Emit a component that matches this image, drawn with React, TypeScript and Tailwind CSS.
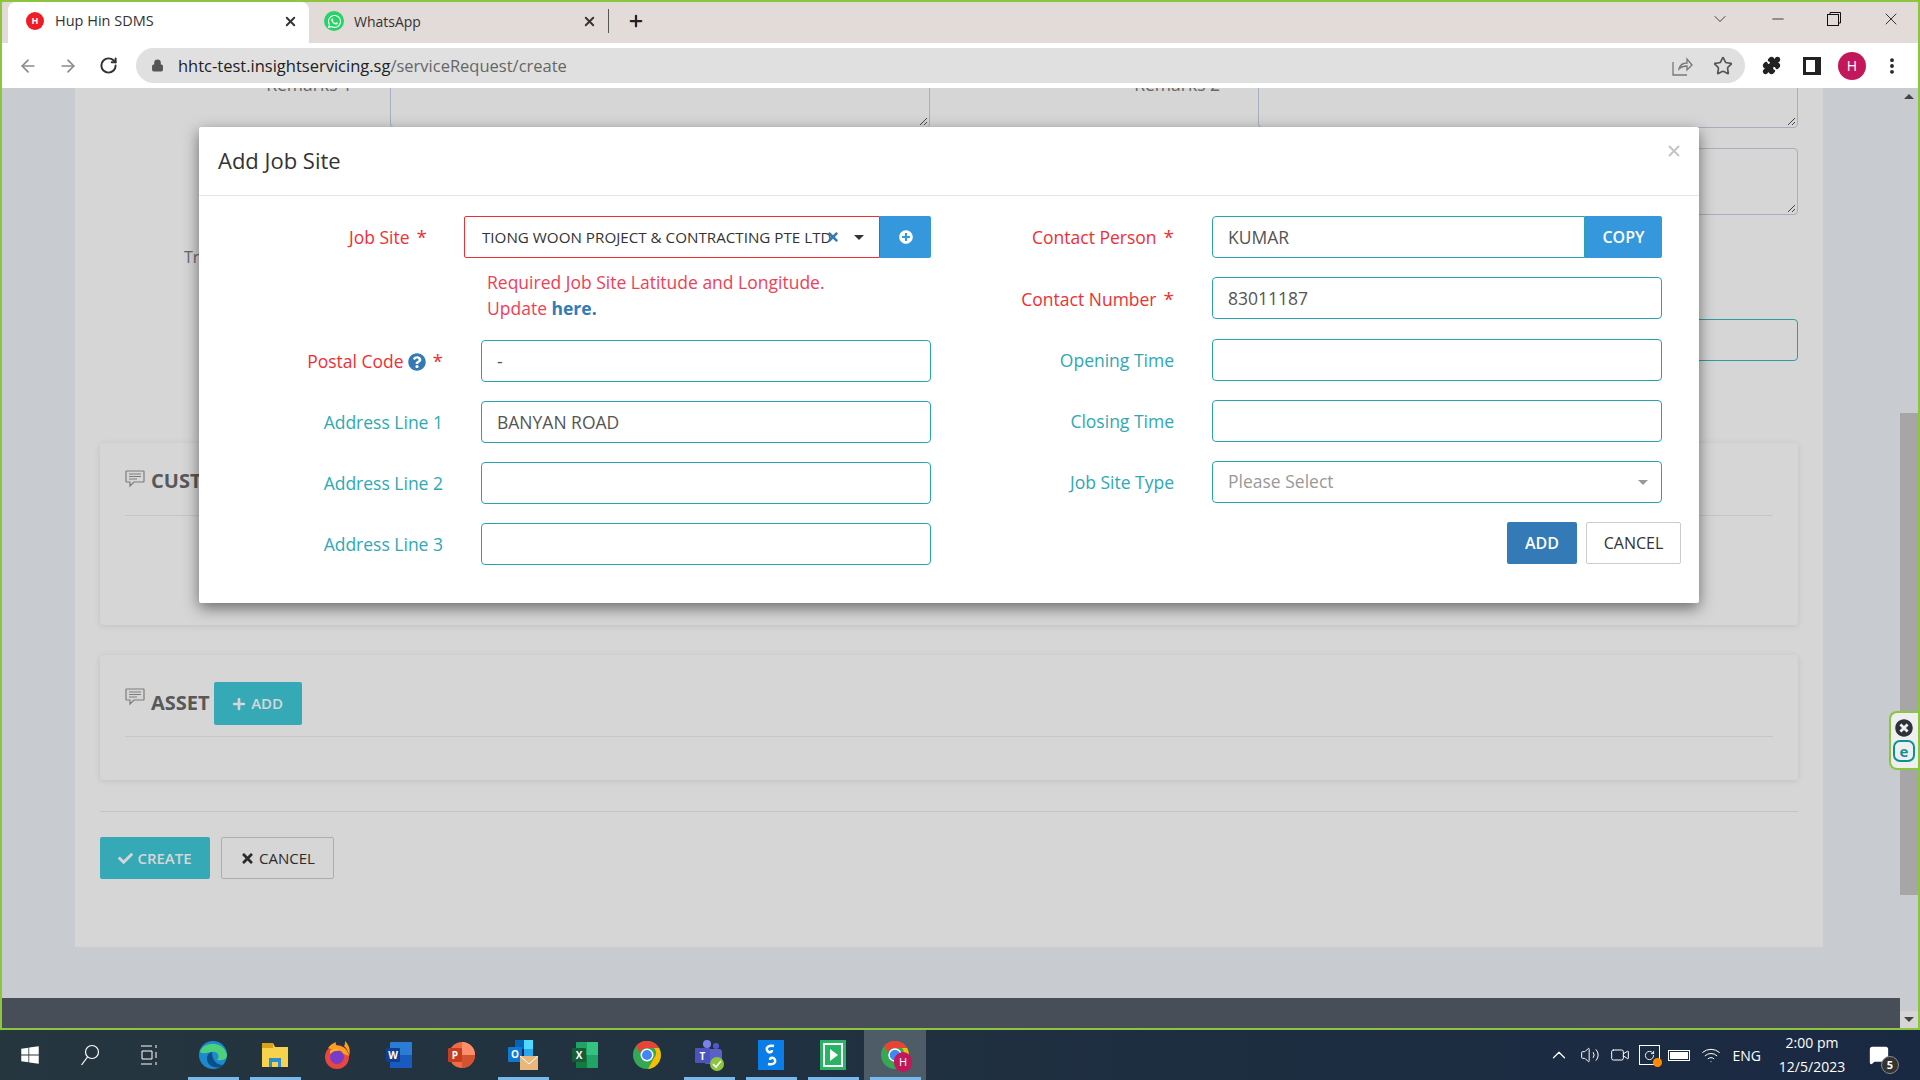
import type { ReactNode } from 'react';
import { ArrowLeft, ArrowRight, RotateCw, Lock, Star, Puzzle, X, Plus, ChevronDown, Minus, ChevronUp, MoreVertical, Volume2, Video, Wifi, MessageSquare } from 'lucide-react';
import { FaWhatsapp, FaCheck, FaTimes, FaPlus, FaQuestionCircle, FaPlusCircle, FaTimesCircle, FaWindows } from 'react-icons/fa';

const font = { fontFamily: '"Open Sans", sans-serif' };

function Tabs() {
  return (
    <div className="flex h-[41px] items-end bg-[#e3dbd8] pl-[6px] pr-[8px]">
      <div className="flex h-[41px] w-[301px] items-center rounded-t-[8px] bg-white pb-[3px] pl-[18px] pr-[11px]">
        <div className="flex h-[18px] w-[18px] items-center justify-center rounded-full bg-[#ee1c25] text-[9px] font-bold text-white">H</div>
        <span className="ml-[11px] flex-1 text-[14.5px] text-[#333]">Hup Hin SDMS</span>
        <X size={15} strokeWidth={3} className="text-[#333]" />
      </div>
      <div className="flex h-[41px] w-[300px] items-center pb-[3px]">
        <div className="ml-[15px] flex h-[20px] w-[20px] items-center justify-center rounded-full bg-[#25d366] text-white"><FaWhatsapp size={15} /></div>
        <span className="ml-[10px] flex-1 text-[14px] text-[#333]">WhatsApp</span>
        <X size={15} strokeWidth={3} className="text-[#333]" />
        <div className="ml-[11px] h-[24px] w-px bg-[#555]" />
      </div>
      <div className="flex h-[41px] items-center pb-[3px] pl-[18px]"><Plus size={18} strokeWidth={3} className="text-[#222]" /></div>
      <div className="flex-1" />
      <div className="flex h-[41px] items-center self-start pb-[8px]">
        <ChevronDown size={20} strokeWidth={1} className="mr-[39px] text-[#222]" />
        <Minus size={18} strokeWidth={1} className="mr-[40px] text-[#111]" />
        <svg width="14" height="14" viewBox="0 0 14 14" fill="none" stroke="#111" className="mr-[40px]"><rect x="0.5" y="2.5" width="11" height="11" /><path d="M3 2.5V.5h10.5V11h-2" /></svg>
        <X size={20} strokeWidth={1} className="mr-[9px] text-[#111]" />
      </div>
    </div>
  );
}

function Toolbar() {
  return (
    <div className="flex h-[45px] items-center bg-white">
      <ArrowLeft size={20} className="ml-[16px] text-[#8a8a8a]" />
      <ArrowRight size={20} className="ml-[20px] text-[#8a8a8a]" />
      <RotateCw size={19} strokeWidth={2.5} className="ml-[21px] text-[#333]" />
      <div className="ml-[18px] flex h-[35px] w-[1609px] items-center rounded-full bg-[#e0e0e0] pl-[15px]">
        <Lock size={13} fill="#555" className="text-[#555]" />
        <span className="ml-[14px] flex-1 pt-[1px] text-[16.5px] text-[#222]">hhtc-test.insightservicing.sg<span className="text-[#666]">/serviceRequest/create</span></span>
        <svg width="21" height="20" viewBox="0 0 21 20" fill="none" stroke="#777" strokeWidth="1.3" className="mr-[20px]"><path d="M1 6v13h14M7 13c1-4 4-6 8-6V3l5 6-5 5v-4c-3 0-6 1-8 3z" /></svg>
        <Star size={20} strokeWidth={2} className="mr-[12px] text-[#555]" />
      </div>
      <Puzzle size={19} fill="#222" className="ml-[17px] text-[#222]" />
      <div className="ml-[22px] flex h-[18px] w-[18px] items-center bg-[#222] pl-[3px]"><div className="h-[12px] w-[9px] bg-white" /></div>
      <div className="ml-[17px] flex h-[28px] w-[28px] items-center justify-center rounded-full bg-[#c2185b] text-[14px] text-white">H</div>
      <MoreVertical size={20} strokeWidth={2.6} className="ml-[16px] text-[#222]" />
    </div>
  );
}

function Textarea({ className }: { className: string }) {
  return (
    <div className={`relative rounded-[4px] border border-[#a6aec0] ${className}`}>
      <svg width="9" height="9" viewBox="0 0 9 9" stroke="#444" className="absolute bottom-[1px] right-[1px]"><path d="M1 8l7-7M5 8l3-3" /></svg>
    </div>
  );
}

function SectionTitle({ children, iconClass }: { children: ReactNode; iconClass: string }) {
  return (
    <div className="flex h-[43px] items-center">
      <svg width="20" height="18" viewBox="0 0 20 18" fill="none" stroke="#7c7c7c" strokeWidth="1.2" className={`mr-[6px] ${iconClass}`}>
        <path d="M1.5 1h17a.5.5 0 0 1 .5.5v10a.5.5 0 0 1-.5.5H9l-4 4v-4H1.5a.5.5 0 0 1-.5-.5v-10a.5.5 0 0 1 .5-.5z" />
        <path d="M4 4h12M4 6.5h12M4 9h8" />
      </svg>
      <span className="text-[20px] font-bold text-[#585858]">{children}</span>
    </div>
  );
}

function Page() {
  return (
    <div className="flex flex-1 flex-col overflow-hidden">
      <div className="flex h-[910px] bg-[#c8cbcf]">
        <div className="w-[74px]" />
        <div className="-mt-[36px] h-[895px] w-[1748px] bg-[#d6d6d6] px-[25px] text-[#666]">
          <div className="flex h-[76px]">
            <div className="w-[252px] pt-[19px] text-right text-[17.5px]">Remarks 1</div>
            <Textarea className="ml-[38px] w-[540px]" />
            <div className="w-[290px] pt-[19px] text-right text-[17.5px]">Remarks 2</div>
            <Textarea className="ml-[38px] w-[540px]" />
          </div>
          <div className="mt-[20px] flex justify-end"><Textarea className="h-[67px] w-[540px]" /></div>
          <div className="mt-[31px] h-[22px] pl-[84px] text-[16px] leading-[22px]">Tr</div>
          <div className="mt-[51px] ml-auto h-[42px] w-[540px] rounded-[4px] border border-[#2f9ba6]" />
          <div className="mt-[82px] h-[182px] rounded-[4px] bg-[#d6d6d6] px-[25px] pt-[15px] shadow-[0_1px_6px_rgba(0,0,0,0.1)]">
            <div className="mt-[1px] border-b border-[#c6c6c6] pb-[13px]"><SectionTitle iconClass="-mt-[3px]">CUSTOMER</SectionTitle></div>
          </div>
          <div className="mt-[30px] h-[125px] rounded-[4px] bg-[#d6d6d6] px-[25px] pt-[27px] shadow-[0_1px_6px_rgba(0,0,0,0.1)]">
            <div className="flex h-[55px] items-start border-b border-[#c6c6c6]">
              <div className="-mt-[1px]"><SectionTitle iconClass="-mt-[12px]">ASSET</SectionTitle></div>
              <button className="ml-[4px] flex h-[43px] w-[88px] items-center justify-center gap-[5px] rounded-[2px] bg-[#36a9b6] text-[15px] font-semibold text-[#d6d6d6]"><FaPlus size={14} />ADD</button>
            </div>
          </div>
          <div className="mt-[31px] border-t border-[#c4c4c4] pt-[25px]">
            <div className="flex gap-[11px]">
              <button className="flex h-[42px] w-[110px] items-center justify-center gap-[4px] rounded-[2px] bg-[#36a9b6] text-[15px] font-semibold text-[#d6d6d6]"><FaCheck size={15} />CREATE</button>
              <button className="flex h-[42px] w-[113px] items-center justify-center gap-[4px] rounded-[2px] border border-[#adadad] text-[15px] text-[#2b2b2b]"><FaTimes size={15} />CANCEL</button>
            </div>
          </div>
        </div>
        <div className="w-[78px]" />
      </div>
      <div className="h-[30px] bg-[#474e58]" />
    </div>
  );
}

function Scrollbar() {
  return (
    <div className="flex w-[18px] flex-col bg-[#c8cbcf]">
      <div className="flex h-[17px] justify-center pt-[6px] text-[#444]"><div className="h-0 w-0 border-x-[5px] border-b-[5px] border-x-transparent border-b-[#444]" /></div>
      <div className="mt-[308px] h-[482px] bg-[#a6a6a6]" />
      <div className="flex-1" />
      <div className="flex h-[17px] justify-center bg-[#d6d6d6] pt-[6px]"><div className="h-0 w-0 border-x-[5px] border-t-[5px] border-x-transparent border-t-[#444]" /></div>
    </div>
  );
}

function Label({ children, required, tip }: { children: ReactNode; required?: boolean; tip?: boolean }) {
  return (
    <div className={`flex w-[244px] shrink-0 items-center justify-end gap-[7px] pt-[1px] text-[17.5px] ${required ? 'text-[#ee2f35]' : 'text-[#2fa8b5]'}`}>
      <span>{children}</span>
      {tip && <FaQuestionCircle size={18} className="-ml-[3px] text-[#337ab7]" />}
      {required && <span className="text-[19px]">*</span>}
    </div>
  );
}

function Field({ label, value, required, tip }: { label: string; value?: string; required?: boolean; tip?: boolean }) {
  return (
    <div className="flex h-[42px]">
      <Label required={required} tip={tip}>{label}</Label>
      <div className="ml-[38px] flex w-[450px] shrink-0 items-center rounded-[4px] border border-[#29a3af] px-[15px] text-[17.5px] text-[#555]">{value}</div>
    </div>
  );
}

function Modal() {
  return (
    <div className="absolute left-[197px] top-[39px] h-[476px] w-[1500px] rounded-[2px] bg-white shadow-[0_5px_15px_rgba(0,0,0,0.5)]">
      <div className="flex h-[69px] items-center justify-between border-b border-[#e5e5e5] pb-[2px] pl-[19px] pr-[16px]">
        <span className="text-[22px] text-[#333]">Add Job Site</span>
        <X size={18} strokeWidth={2.5} className="-mt-[19px] text-[#c4c4c4]" />
      </div>
      <div className="flex pt-[20px]">
        <div className="w-[731px] shrink-0">
          <div className="flex h-[42px]">
            <div className="flex w-[228px] shrink-0 items-center justify-end gap-[7px] pt-[1px] text-[17.5px] text-[#ee2f35]"><span>Job Site</span><span className="text-[19px]">*</span></div>
            <div className="ml-[37px] flex w-[416px] shrink-0 items-center rounded-l-[2px] border border-[#ee2f35] pl-[17px] text-[15.2px] text-[#333]">
              <span className="w-[356px] overflow-hidden whitespace-nowrap">TIONG WOON PROJECT &amp; CONTRACTING PTE LTD</span>
              <FaTimes size={14} className="-ml-[12px] text-[#337ab7]" />
              <div className="ml-[14px] h-0 w-0 border-x-[5px] border-t-[5px] border-x-transparent border-t-[#333]" />
            </div>
            <div className="flex w-[51px] shrink-0 items-center justify-center rounded-r-[2px] bg-[#3598dc] text-white"><FaPlusCircle size={14} /></div>
          </div>
          <div className="ml-[288px] mt-[12px] h-[50px] text-[17.5px] leading-[25.5px] text-[#ef4056]">
            Required Job Site Latitude and Longitude.<br />Update <span className="font-bold text-[#337ab7]">here.</span>
          </div>
          <div className="mt-[20px] flex flex-col gap-[19px]">
            <Field label="Postal Code" value="-" required tip />
            <Field label="Address Line 1" value="BANYAN ROAD" />
            <Field label="Address Line 2" />
            <Field label="Address Line 3" />
          </div>
        </div>
        <div className="w-[731px] shrink-0">
          <div className="flex flex-col gap-[19.25px]">
            <div className="flex h-[42px]">
              <Label required>Contact Person</Label>
              <div className="ml-[38px] flex w-[450px] shrink-0">
                <div className="flex flex-1 items-center rounded-l-[4px] border border-[#29a3af] px-[15px] text-[17.5px] text-[#555]">KUMAR</div>
                <div className="flex w-[77px] items-center justify-center rounded-r-[2px] bg-[#3598dc] text-[16px] font-semibold text-white">COPY</div>
              </div>
            </div>
            <Field label="Contact Number" value="83011187" required />
            <Field label="Opening Time" />
            <Field label="Closing Time" />
            <div className="flex h-[42px]">
              <Label>Job Site Type</Label>
              <div className="ml-[38px] flex w-[450px] shrink-0 items-center justify-between rounded-[4px] border border-[#29a3af] px-[15px] pb-[2px] text-[17.5px] text-[#999]">
                Please Select
                <div className="-mr-[2px] mt-[2px] h-0 w-0 border-x-[5px] border-t-[5px] border-x-transparent border-t-[#999]" />
              </div>
            </div>
          </div>
          <div className="mt-[19px] flex w-[751px] justify-end gap-[9px]">
            <button className="h-[42px] w-[70px] rounded-[2px] bg-[#337ab7] text-[16px] font-semibold text-white">ADD</button>
            <button className="h-[42px] w-[95px] rounded-[2px] border border-[#ccc] text-[16px] text-[#333]">CANCEL</button>
          </div>
        </div>
      </div>
    </div>
  );
}

function Eset() {
  return (
    <div className="absolute right-0 top-[623px] flex h-[59px] w-[29px] flex-col items-center justify-center gap-[3px] rounded-l-[8px] border-2 border-r-0 border-[#8cc63f] bg-[#eef0f0] pr-[1px]">
      <FaTimesCircle size={18} className="text-[#2d3238]" />
      <div className="flex h-[22px] w-[22px] items-center justify-center rounded-[7px] border-2 border-[#0f8f97] text-[15px] font-bold leading-none text-[#0f8f97]">e</div>
    </div>
  );
}

// taskbar app icons are rough hand drawn shapes
const apps: { icon: ReactNode; line?: boolean; active?: boolean }[] = [
  { line: true, icon: <svg width="30" height="30" viewBox="0 0 30 30"><circle cx="15" cy="15" r="14" fill="#1d8ad0" /><path d="M2 12C5 1 26 0 29 15c0 5-6 6-10 5 4-4 0-9-5-8-5 0-7 3-12 0z" fill="#4cd07d" /><path d="M14 12c-6 1-7 10-1 14 4 2 9 2 13-1-7 1-12-5-12-13z" fill="#0c4f87" /></svg> },
  { line: true, icon: <svg width="30" height="30" viewBox="0 0 30 30"><path d="M2 3h11l2 4h13v20H2z" fill="#f8d24b" /><rect x="2" y="3" width="11" height="5" fill="#d9a21b" /><path d="M9 27v-9h12v9h-3v-5h-6v5z" fill="#2b8fd1" /></svg> },
  { icon: <svg width="30" height="30" viewBox="0 0 30 30"><circle cx="15" cy="17" r="12" fill="#e8473f" /><path d="M6 8c3-4 6-5 8-6-1 3 1 4 4 4 4 1 8 4 9 11 0-6-3-9-5-11 1-1 1-3 1-5 4 4 6 9 4 15L6 8z" fill="#ff9d1e" /><circle cx="15" cy="17" r="7" fill="#7a3bc8" /><path d="M8 11c3-3 8-2 10 0-4-1-7 0-10 3z" fill="#ffb42a" /></svg> },
  { icon: <svg width="30" height="30" viewBox="0 0 30 30"><rect x="6" y="2" width="22" height="26" rx="1" fill="#2b7cd3" /><rect x="6" y="15" width="22" height="13" fill="#185abd" /><rect x="2" y="8" width="14" height="14" rx="1" fill="#103f91" /><text x="9" y="19" textAnchor="middle" fontSize="10" fontWeight="700" fill="#fff" fontFamily="Open Sans">W</text></svg> },
  { icon: <svg width="30" height="30" viewBox="0 0 30 30"><circle cx="16" cy="15" r="13" fill="#ed6c47" /><path d="M16 2a13 13 0 0 1 13 13H16z" fill="#ff8f6b" /><path d="M16 15h13a13 13 0 0 1-13 13z" fill="#d35230" /><rect x="2" y="8" width="14" height="14" rx="1" fill="#c43e1c" /><text x="9" y="19" textAnchor="middle" fontSize="10" fontWeight="700" fill="#fff" fontFamily="Open Sans">P</text></svg> },
  { line: true, icon: <svg width="34" height="34" viewBox="0 0 34 34"><rect x="9" y="2" width="18" height="18" fill="#28a8ea" /><rect x="9" y="2" width="9" height="9" fill="#0364b8" /><rect x="18" y="2" width="9" height="9" fill="#50d9ff" /><rect x="9" y="11" width="9" height="12" fill="#0a2767" /><rect x="2" y="9" width="14" height="15" rx="1" fill="#0f78d4" /><text x="9" y="20" textAnchor="middle" fontSize="10" fontWeight="700" fill="#fff" fontFamily="Open Sans">O</text><rect x="14" y="18" width="18" height="14" fill="#e8b77c" /><path d="M14 18l9 8 9-8" fill="none" stroke="#fff" /></svg> },
  { icon: <svg width="30" height="30" viewBox="0 0 30 30"><rect x="6" y="2" width="22" height="26" rx="1" fill="#21a366" /><rect x="17" y="2" width="11" height="13" fill="#33c481" /><rect x="6" y="15" width="11" height="13" fill="#107c41" /><rect x="2" y="8" width="14" height="14" rx="1" fill="#185c37" /><text x="9" y="19" textAnchor="middle" fontSize="10" fontWeight="700" fill="#fff" fontFamily="Open Sans">X</text></svg> },
  { icon: <svg width="30" height="30" viewBox="0 0 30 30"><circle cx="15" cy="15" r="14" fill="#34a853" /><path d="M15 1a14 14 0 0 1 12 7H15a7 7 0 0 0-7 5L4 6a14 14 0 0 1 11-5z" fill="#ea4335" /><path d="M27 8a14 14 0 0 1-11 21l6-11a7 7 0 0 0 0-10z" fill="#fbbc04" /><circle cx="15" cy="15" r="6.5" fill="#fff" /><circle cx="15" cy="15" r="5" fill="#4285f4" /></svg> },
  { line: true, icon: <svg width="34" height="34" viewBox="0 0 34 34"><circle cx="15" cy="6" r="4" fill="#7b83eb" /><circle cx="24" cy="8" r="3" fill="#5059c9" /><rect x="12" y="11" width="18" height="15" rx="3" fill="#5b5fc7" /><rect x="3" y="10" width="15" height="15" rx="1" fill="#4b53bc" /><text x="10.5" y="21.5" textAnchor="middle" fontSize="10" fontWeight="700" fill="#fff" fontFamily="Open Sans">T</text><circle cx="25" cy="26" r="7" fill="#8cc63f" /><path d="M21 26l3 3 5-6" fill="none" stroke="#fff" strokeWidth="1.6" /></svg> },
  { line: true, icon: <svg width="30" height="30" viewBox="0 0 30 30"><rect x="2" y="0" width="26" height="30" fill="#0a7de8" /><path d="M18 6c-5-1-8 1-7 4s5 3 5 0M12 24c5 1 8-1 7-4s-5-3-5 0" fill="none" stroke="#fff" strokeWidth="2.4" /></svg> },
  { line: true, icon: <svg width="30" height="30" viewBox="0 0 30 30"><rect x="2" y="0" width="26" height="30" fill="#28b463" /><rect x="5" y="3" width="20" height="24" fill="#fff" /><rect x="7" y="5" width="16" height="20" fill="#28b463" /><path d="M12 9l8 6-8 6z" fill="#fff" /></svg> },
  { line: true, active: true, icon: <div className="relative h-[30px] w-[30px]"><svg width="30" height="30" viewBox="0 0 30 30"><circle cx="15" cy="15" r="14" fill="#34a853" /><path d="M15 1a14 14 0 0 1 12 7H15a7 7 0 0 0-7 5L4 6a14 14 0 0 1 11-5z" fill="#ea4335" /><path d="M27 8a14 14 0 0 1-11 21l6-11a7 7 0 0 0 0-10z" fill="#fbbc04" /><circle cx="15" cy="15" r="6" fill="#4285f4" stroke="#fff" strokeWidth="1.5" /></svg><div className="absolute -bottom-[2px] -right-[2px] flex h-[20px] w-[18px] items-center justify-center rounded-full bg-[#c2185b] text-[11px] text-white">H</div></div> },
];

function Taskbar() {
  return (
    <div className="flex h-[50px] items-center bg-gradient-to-r from-[#25363f] to-[#1a2942] text-white">
      <FaWindows size={20} className="ml-[20px]" />
      <svg width="20" height="22" viewBox="0 0 20 22" fill="none" stroke="#fff" strokeWidth="1.2" className="ml-[40px]"><circle cx="12" cy="8" r="6.5" /><path d="M7.5 13l-6 8" /></svg>
      <svg width="18" height="20" viewBox="0 0 18 20" fill="none" stroke="#fff" className="ml-[41px]"><path d="M0 1h11M0 19h11M1 6h10v8H1zM15 0v3M15 7v6M15 17v3" /></svg>
      <div className="ml-[23px] flex">
        {apps.map((app, i) => (
          <div key={i} className={`relative flex h-[50px] w-[62px] items-center justify-center ${app.active ? 'bg-[#4d5c66]' : ''}`}>
            {app.icon}
            {app.line && <div className="absolute bottom-0 h-[3px] w-[51px] bg-[#76b9ed]" />}
          </div>
        ))}
      </div>
      <div className="flex-1" />
      <ChevronUp size={22} strokeWidth={1.3} />
      <Volume2 size={20} strokeWidth={1.2} className="ml-[10px]" />
      <Video size={20} strokeWidth={1.2} className="ml-[10px]" />
      <div className="relative ml-[9px] flex h-[20px] w-[21px] items-center justify-center border border-white">
        <RotateCw size={11} />
        <div className="absolute -bottom-[3px] -right-[3px] h-[9px] w-[9px] rounded-full bg-[#ff8c00]" />
      </div>
      <div className="ml-[8px] flex h-[11px] w-[22px] items-center border border-white p-px"><div className="h-full w-full bg-white" /></div>
      <Wifi size={20} strokeWidth={1.2} className="ml-[11px]" />
      <span className="ml-[12px] text-[14px]">ENG</span>
      <div className="ml-[16px] w-[70px] whitespace-nowrap text-center text-[14px] leading-[24px]">2:00 pm<br />12/5/2023</div>
      <div className="relative ml-[22px] mr-[31px]">
        <MessageSquare size={20} fill="#fff" />
        <div className="absolute -bottom-[9px] -right-[10px] flex h-[18px] w-[18px] items-center justify-center rounded-full border border-[#888] bg-[#333] text-[11px] font-bold">5</div>
      </div>
    </div>
  );
}

export default function App() {
  return (
    <div className="flex h-[1080px] w-[1920px] flex-col overflow-hidden bg-[#8cc63f]" style={font}>
      <div className="mx-[2px] mt-[2px] flex flex-1 flex-col overflow-hidden">
        <Tabs />
        <Toolbar />
        <div className="relative flex flex-1 overflow-hidden">
          <Page />
          <Scrollbar />
          <Modal />
          <Eset />
        </div>
      </div>
      <div className="mt-[2px]"><Taskbar /></div>
    </div>
  );
}
